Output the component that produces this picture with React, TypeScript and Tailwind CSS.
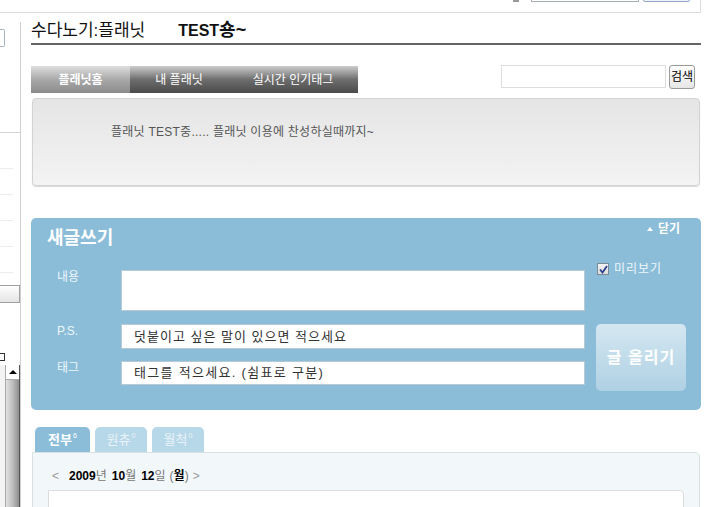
import React from "react";

function TopBar() {
  return (
    <div className="h-[13px] w-[701px] border-b border-r border-[#dcdcdc] overflow-hidden flex justify-end items-end pr-[10px] pb-[10px]">
      <div className="w-[6px] h-[4px] border-b-2 border-l border-[#9a9a9a]" />
      <div className="ml-[12px] w-[108px] h-[20px] border border-[#a5acb5] bg-white" />
      <div className="ml-[4px] w-[47px] h-[20px] border border-[#8fa6c8] rounded-[2px] bg-[#f2f4fa]" />
    </div>
  );
}

function Sidebar() {
  return (
    <div className="mt-[9px] w-[21px] h-[485px] border-r border-[#d0d0d0] flex flex-col shrink-0">
      <div className="mt-[7px] w-[5px] h-[18px] border border-l-0 border-[#a9b3bf] rounded-r-[2px]" />
      <div className="mt-[85px] h-px bg-[#d4d4d4]" />
      <div className="mt-[35px] w-[13px] h-px bg-[#ececec]" />
      <div className="mt-[25px] w-[13px] h-px bg-[#ececec]" />
      <div className="mt-[25px] w-[13px] h-px bg-[#ececec]" />
      <div className="mt-[25px] w-[13px] h-px bg-[#ececec]" />
      <div className="mt-[25px] w-[13px] h-px bg-[#ececec]" />
      <div className="mt-[12px] w-[20px] h-[18px] border border-l-0 border-[#a0a0a0] bg-[linear-gradient(#ffffff,#e4e4e4)]" />
      <div className="mt-[50px] w-[5px] h-[8px] border border-l-0 border-[#333]" />
      <div className="mt-[4px] flex-1 flex">
        <div className="w-[5px] bg-[#f4f4f4]" />
        <div className="flex-1 flex flex-col border-l border-[#aaa] border-r border-r-[#555]">
          <div className="h-[15px] bg-white border-b border-[#aaa] flex items-center justify-center">
            <div className="w-0 h-0 border-l-[4px] border-r-[4px] border-b-[4px] border-l-transparent border-r-transparent border-b-black" />
          </div>
          <div className="flex-1 bg-[linear-gradient(90deg,#e2e2e2,#bdbdbd_50%,#8e8e8e)]" />
        </div>
      </div>
    </div>
  );
}

function WriteBox() {
  return (
    <div className="mt-[32px] rounded-[5px] bg-[#8bbdd9] pb-[19px]">
      <div className="flex justify-between items-start pt-[3px] pl-[16px] pr-[21px]">
        <div className="mt-[5px] text-[18px] leading-[24px] font-bold text-white">새글쓰기</div>
        <div className="flex items-center gap-[5px] text-[12px] leading-[16px] font-bold text-white">
          <div className="w-0 h-0 border-l-[3px] border-r-[3px] border-b-[4px] border-l-transparent border-r-transparent border-b-white" />
          닫기
        </div>
      </div>
      <div className="mt-[13px] flex items-start pl-[26px]">
        <div className="w-[64px] mt-[7px] text-[12px] leading-[14px] text-[#eef6fa]">내용</div>
        <div className="mt-[7px] w-[464px] h-[41px] bg-white border border-[#b7c9d3]" />
        <div className="ml-[12px] flex items-center gap-[5px] text-[12px] leading-[12px] tracking-[1px] text-[#eef6fa]">
          <div className="w-[12px] h-[12px] border border-[#7a8a99] bg-[linear-gradient(#f3f3f3,#dcdcdc)] flex items-center justify-center">
            <svg width="9" height="9" viewBox="0 0 9 9">
              <path d="M1 4.5 L3.5 7.5 L8 1" fill="none" stroke="#2b3f8f" strokeWidth="1.8" />
            </svg>
          </div>
          미리보기
        </div>
      </div>
      <div className="mt-[13px] flex items-start pl-[26px]">
        <div className="flex flex-col">
          <div className="flex items-start">
            <div className="w-[64px] text-[12px] leading-[14px] text-[#eef6fa]">P.S.</div>
            <div className="w-[464px] h-[25px] bg-white border border-[#b7c9d3] flex items-center pl-[12px] text-[13px] tracking-[1px] text-[#333]">
              덧붙이고 싶은 말이 있으면 적으세요
            </div>
          </div>
          <div className="mt-[12px] flex items-start">
            <div className="w-[64px] text-[12px] leading-[14px] text-[#eef6fa]">태그</div>
            <div className="w-[464px] h-[24px] bg-white border border-[#b7c9d3] flex items-center pl-[12px] text-[13px] tracking-[1.3px] text-[#333]">
              태그를 적으세요. (쉼표로 구분)
            </div>
          </div>
        </div>
        <div className="ml-[11px] w-[90px] h-[67px] rounded-[5px] bg-[linear-gradient(#d4e7f1,#afd1e4)] flex items-center justify-center text-[16px] tracking-[1px] font-bold text-white">
          글 올리기
        </div>
      </div>
    </div>
  );
}

function ListBox() {
  return (
    <div>
      <div className="mt-[17px] flex gap-[5px] pl-[4px]">
        <div className="w-[55px] h-[25px] rounded-t-[5px] bg-[#8bbdd9] flex items-center justify-center text-[13px] font-bold text-white">
          전부<sup className="text-[7px] font-normal ml-[1px]">6</sup>
        </div>
        <div className="w-[52px] h-[25px] rounded-t-[5px] bg-[#b7d8e9] flex items-center justify-center text-[13px] text-[#e9f3f8]">
          원츄<sup className="text-[7px] ml-[1px]">0</sup>
        </div>
        <div className="w-[52px] h-[25px] rounded-t-[5px] bg-[#b7d8e9] flex items-center justify-center text-[13px] text-[#e9f3f8]">
          월척<sup className="text-[7px] ml-[1px]">0</sup>
        </div>
      </div>
      <div className="ml-[1px] w-[668px] h-[70px] border border-[#d8e0e4] rounded-tr-[5px] bg-[#f2f7f9] pt-[15px]">
        <div className="flex items-center pl-[19px] text-[12px] leading-[16px] text-[#777]">
          <span className="text-[#999]">&lt;</span>
          <span className="ml-[10px] font-bold text-black">2009</span>
          <span>년</span>
          <span className="ml-[5px] font-bold text-black">10</span>
          <span>월</span>
          <span className="ml-[5px] font-bold text-black">12</span>
          <span>일</span>
          <span className="ml-[4px]">(</span>
          <span className="font-bold text-black">월</span>
          <span>)</span>
          <span className="ml-[4px] text-[#999]">&gt;</span>
        </div>
        <div className="mt-[6px] mx-[15px] h-[30px] bg-white border border-[#dcdcdc] rounded-tr-[4px]" />
      </div>
    </div>
  );
}

export default function App() {
  return (
    <div className="w-[719px] h-[507px] overflow-hidden bg-white font-['Liberation_Sans','Noto_Sans_CJK_KR',sans-serif] text-[12px] text-[#333]">
      <TopBar />
      <div className="flex items-start">
        <Sidebar />
        <main className="w-[670px] ml-[10px]">
          <div className="h-[32px] pt-[7px] border-b-2 border-[#666] flex items-baseline text-[17px] leading-[20px] text-[#111] overflow-hidden">
            <span>수다노기:플래닛</span>
            <span className="ml-[33px] font-bold text-[16px]">TEST</span>
            <span className="font-bold text-[18px]">숑~</span>
          </div>
          <div className="mt-[21px] flex justify-between items-start">
            <div className="flex h-[27px] text-[12px] text-white">
              <div className="w-[99px] flex items-center justify-center font-bold bg-[linear-gradient(#dedede,#a9a9a9_50%,#8b8b8b)]">플래닛홈</div>
              <div className="w-[98px] flex items-center justify-center bg-[linear-gradient(#cdcdcd,#6e6e6e_50%,#4a4a4a)]">내 플래닛</div>
              <div className="w-[130px] flex items-center justify-center bg-[linear-gradient(#cdcdcd,#6e6e6e_50%,#4a4a4a)]">실시간 인기태그</div>
            </div>
            <div className="flex items-start gap-[3px] mr-[6px] mt-[-1px]">
              <div className="w-[165px] h-[23px] border border-[#dddddd] bg-white" />
              <div className="w-[26px] h-[24px] border border-[#9a9a9a] rounded-[3px] bg-[linear-gradient(#ffffff,#e6e6e6)] flex items-center justify-center text-[12px] text-black">검색</div>
            </div>
          </div>
          <div className="mt-[5px] ml-[1px] w-[668px] h-[88px] rounded-[4px] border border-[#d3d3d3] shadow-[0_1px_1px_rgba(0,0,0,0.15)] bg-[linear-gradient(#e5e5e5,#f3f3f3)] pt-[25px] pl-[78px] text-[12px] leading-[16px] tracking-[0.25px] text-[#555]">
            플래닛 TEST중..... 플래닛 이용에 찬성하실때까지~
          </div>
          <WriteBox />
          <ListBox />
        </main>
      </div>
    </div>
  );
}
